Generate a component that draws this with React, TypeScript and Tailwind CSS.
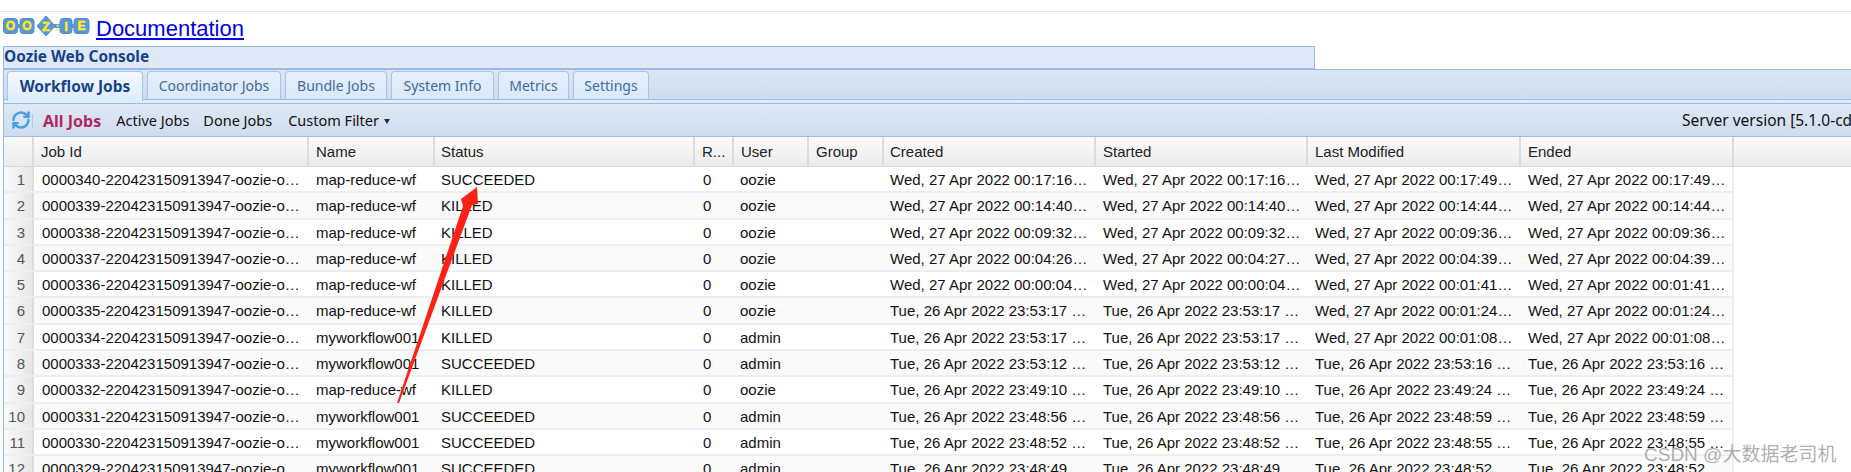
// App.tsx - Oozie web console job list

import React from 'react';
import { RefreshCw } from 'lucide-react';

type Job = {
    id: string;
    name: string;
    status: string;
    user: string;
    created: string;
    started: string;
    modified: string;
    ended: string;
};

const WED = 'Wed, 27 Apr 2022 ';
const TUE = 'Tue, 26 Apr 2022 ';

const job = (
    num: string,
    name: string,
    status: string,
    user: string,
    created: string,
    started: string,
    modified: string,
    ended: string
): Job => ({
    id: `${num}-220423150913947-oozie-oozi-W`,
    name,
    status,
    user,
    created: `${created} GMT`,
    started: `${started} GMT`,
    modified: `${modified} GMT`,
    ended: `${ended} GMT`,
});

const MR = 'map-reduce-wf';
const MY = 'myworkflow001';

const jobs: Job[] = [
    job('0000340', MR, 'SUCCEEDED', 'oozie', WED + '00:17:16', WED + '00:17:16', WED + '00:17:49', WED + '00:17:49'),
    job('0000339', MR, 'KILLED', 'oozie', WED + '00:14:40', WED + '00:14:40', WED + '00:14:44', WED + '00:14:44'),
    job('0000338', MR, 'KILLED', 'oozie', WED + '00:09:32', WED + '00:09:32', WED + '00:09:36', WED + '00:09:36'),
    job('0000337', MR, 'KILLED', 'oozie', WED + '00:04:26', WED + '00:04:27', WED + '00:04:39', WED + '00:04:39'),
    job('0000336', MR, 'KILLED', 'oozie', WED + '00:00:04', WED + '00:00:04', WED + '00:01:41', WED + '00:01:41'),
    job('0000335', MR, 'KILLED', 'oozie', TUE + '23:53:17', TUE + '23:53:17', WED + '00:01:24', WED + '00:01:24'),
    job('0000334', MY, 'KILLED', 'admin', TUE + '23:53:17', TUE + '23:53:17', WED + '00:01:08', WED + '00:01:08'),
    job('0000333', MY, 'SUCCEEDED', 'admin', TUE + '23:53:12', TUE + '23:53:12', TUE + '23:53:16', TUE + '23:53:16'),
    job('0000332', MR, 'KILLED', 'oozie', TUE + '23:49:10', TUE + '23:49:10', TUE + '23:49:24', TUE + '23:49:24'),
    job('0000331', MY, 'SUCCEEDED', 'admin', TUE + '23:48:56', TUE + '23:48:56', TUE + '23:48:59', TUE + '23:48:59'),
    job('0000330', MY, 'SUCCEEDED', 'admin', TUE + '23:48:52', TUE + '23:48:52', TUE + '23:48:55', TUE + '23:48:55'),
    job('0000329', MY, 'SUCCEEDED', 'admin', TUE + '23:48:49', TUE + '23:48:49', TUE + '23:48:52', TUE + '23:48:52'),
];

const tabs = [
    { label: 'Workflow Jobs', width: 'w-[136px]' },
    { label: 'Coordinator Jobs', width: 'w-[134px]' },
    { label: 'Bundle Jobs', width: 'w-[102px]' },
    { label: 'System Info', width: 'w-[103px]' },
    { label: 'Metrics', width: 'w-[71px]' },
    { label: 'Settings', width: 'w-[76px]' },
];

const headers = [
    { label: 'Job Id', cls: 'w-[275px] pl-[7px]' },
    { label: 'Name', cls: 'w-[126px] pl-[7px]' },
    { label: 'Status', cls: 'w-[260px] pl-[6px]' },
    { label: 'R...', cls: 'w-[39px] pl-[7px]' },
    { label: 'User', cls: 'w-[75px] pl-[7px]' },
    { label: 'Group', cls: 'w-[75px] pl-[7px]' },
    { label: 'Created', cls: 'w-[212px] pl-[6px]' },
    { label: 'Started', cls: 'w-[212px] pl-[7px]' },
    { label: 'Last Modified', cls: 'w-[213px] pl-[7px]' },
    { label: 'Ended', cls: 'w-[213px] pl-[7px]' },
];

const OozieLogo = () => (
    <svg width="88" height="22" viewBox="0 0 88 22" className="shrink-0">
        <g fill="#5a97da" stroke="#4f8bd2" strokeWidth="1">
            <rect x="0.5" y="3.5" width="14" height="15" rx="3" />
            <rect x="17" y="3.5" width="14" height="15" rx="3" />
            <path d="M43 1 L52 11 L43 21 L34 11 Z" />
            <rect x="57" y="3.5" width="12" height="15" rx="3" />
            <rect x="71" y="3.5" width="15" height="15" rx="3" />
        </g>
        <rect x="51" y="9" width="7" height="4" fill="#5a97da" />
        <rect x="69" y="9" width="2" height="4" fill="#5a97da" />
        <rect x="14" y="9" width="3" height="4" fill="#5a97da" />
        <g
            fill="#ffec12"
            stroke="#ffec12"
            strokeWidth="0.5"
            fontFamily="'Liberation Sans', sans-serif"
            fontWeight="700"
            textAnchor="middle"
        >
            <text x="7.5" y="15.3" fontSize="12">O</text>
            <text x="24" y="15.3" fontSize="12">O</text>
            <text x="43" y="15.5" fontSize="13">Z</text>
            <text x="54.5" y="14.5" fontSize="9">:</text>
            <text x="63" y="15.5" fontSize="13">i</text>
            <text x="78.5" y="15.3" fontSize="12">E</text>
        </g>
    </svg>
);

const App: React.FC = () => {
    return (
        <div className="relative h-[472px] w-[1851px] overflow-hidden bg-white font-['Liberation_Sans',Arial,sans-serif]">
            <div className="h-[12px] border-b border-[#e3e3e3]" />
            <div className="flex h-[34px] items-start pl-[3px] pt-[3px]">
                <OozieLogo />
                <a href="#" className="ml-[5px] mt-[1px] text-[22px] leading-[25px] text-[#0000ee] underline">
                    Documentation
                </a>
            </div>

            <div className="ml-[3px] flex h-[23px] w-[1312px] items-center border border-[#99bbe8] bg-[#dfe8f6] pb-[2px]">
                <span className="font-['Noto_Sans',sans-serif] text-[15.4px] font-bold leading-none text-[#15428b]">Oozie Web Console</span>
            </div>

            <div className="ml-[3px] border-l border-[#99bbe8]">
                <div className="flex h-[31px] items-start gap-[4px] border-y border-[#99bbe8] bg-gradient-to-b from-[#dbe6f5] to-[#cddcef] pl-[3px] pt-[1px]">
                    {tabs.map((tab, i) => (
                        <div
                            key={tab.label}
                            className={`${tab.width} flex shrink-0 items-center justify-center rounded-t-[4px] border border-b-0 border-[#a9c3e6] bg-gradient-to-b font-['Noto_Sans',sans-serif] ${
                                i === 0
                                    ? 'h-[30px] from-[#f5f9fe] to-[#deecfd] text-[15.5px] font-bold text-[#15428b]'
                                    : 'h-[28px] from-[#e6effb] to-[#d9e8fb] text-[14px] text-[#416aa3]'
                            }`}
                        >
                            {tab.label}
                        </div>
                    ))}
                </div>
                <div className="h-[4px] border-b border-[#99bbe8] bg-[#deecfd]" />

                <div className="flex h-[33px] items-center overflow-hidden border-b border-[#99bbe8] bg-gradient-to-b from-[#dfe9f6] to-[#cedcee] pt-[2px] font-['Noto_Sans',sans-serif] text-[14.5px] text-[#111111]">
                    <div className="flex w-[1678px] shrink-0 items-center">
                        <RefreshCw size={20} strokeWidth={3} color="#4b9be6" className="ml-[7px] -mt-[2px] shrink-0" />
                        <div className="ml-px h-[14px] w-px bg-[#b8c9df]" />
                        <span className="ml-[10px] text-[16px] font-bold text-[#b0285f]">All Jobs</span>
                        <span className="ml-[15px]">Active Jobs</span>
                        <span className="ml-[14px]">Done Jobs</span>
                        <span className="ml-[16px]">Custom Filter</span>
                        <span className="ml-[5px] h-0 w-0 border-x-[3.5px] border-t-[5px] border-x-transparent border-t-[#15315c]" />
                    </div>
                    <span className="shrink-0 whitespace-nowrap text-[15.5px]">Server version [5.1.0-cdh6.3.2]</span>
                </div>

                <div className="flex h-[30px] w-full border-b border-[#d8d8d8] bg-gradient-to-b from-[#fbfbfb] to-[#ebebeb] text-[15px] text-[#222222]">
                    <div className="w-[30px] shrink-0 border-r-2 border-[#dcdcdc]" />
                    {headers.map((h) => (
                        <div key={h.label} className={`${h.cls} flex shrink-0 items-center border-r-2 border-[#dcdcdc] pt-[2px]`}>
                            {h.label}
                        </div>
                    ))}
                </div>

                {jobs.map((row, i) => (
                    <div key={row.id} className={`flex h-[26.3px] w-[1730px] border-b-2 border-r-2 border-[#eeeeee] text-[15px] text-[#111111] ${i % 2 ? 'bg-[#fafafa]' : 'bg-white'}`}>
                        <div className="flex w-[30px] shrink-0 items-center justify-end border-r-2 border-[#dcdcdc] bg-gradient-to-r from-[#fafafa] to-[#e6e6e6] pr-[7px] pt-[2px] text-[15px] text-[#555555]">
                            {i + 1}
                        </div>
                        <div className="w-[275px] shrink-0 truncate px-[8px] pt-px leading-[24px]">{row.id}</div>
                        <div className="w-[126px] shrink-0 truncate px-[7px] pt-px leading-[24px]">{row.name}</div>
                        <div className="w-[260px] shrink-0 truncate px-[6px] pt-px leading-[24px]">{row.status}</div>
                        <div className="w-[39px] shrink-0 truncate px-[8px] pt-px leading-[24px]">0</div>
                        <div className="w-[75px] shrink-0 truncate px-[6px] pt-px leading-[24px]">{row.user}</div>
                        <div className="w-[75px] shrink-0" />
                        <div className="w-[212px] shrink-0 truncate px-[6px] pt-px leading-[24px]">{row.created}</div>
                        <div className="w-[212px] shrink-0 truncate px-[7px] pt-px leading-[24px]">{row.started}</div>
                        <div className="w-[213px] shrink-0 truncate px-[7px] pt-px leading-[24px]">{row.modified}</div>
                        <div className="w-[213px] shrink-0 truncate px-[7px] pt-px leading-[24px]">{row.ended}</div>
                    </div>
                ))}
            </div>

            {/* annotation arrow drawn on the screenshot */}
            <svg width="1851" height="472" className="pointer-events-none absolute left-0 top-0">
                <polygon points="397,403 463,206 461,199 477,187 478,204 472,205 399,403" fill="#ff2116" />
            </svg>

            {/* watermark */}
            <div className="absolute left-[1644px] top-[443px] whitespace-nowrap font-['Liberation_Sans','Noto_Sans_CJK_SC',sans-serif] text-[19px] leading-[24px] text-[#8c8c8c]/70">
                CSDN @大数据老司机
            </div>
        </div>
    );
};

export default App;
